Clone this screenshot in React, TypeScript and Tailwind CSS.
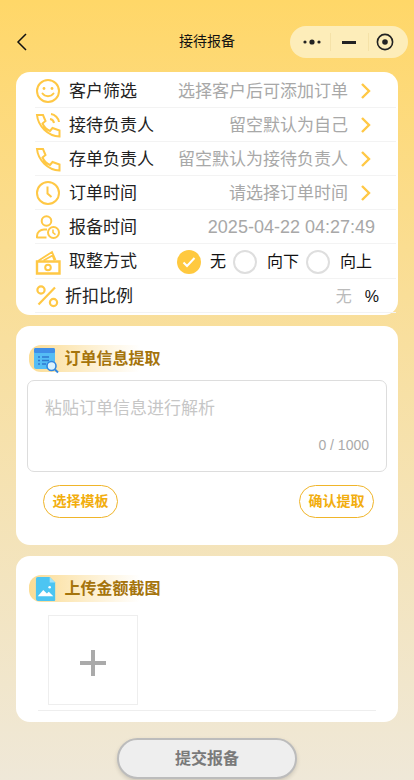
import React from "react";

const Y = "#ffc845";

function Chevron() {
  return (
    <svg width="12" height="18" viewBox="0 0 12 18" fill="none" className="ml-[12px] mr-[24px] mt-px shrink-0">
      <path d="M2 2l7 7-7 7" stroke="#ffc845" strokeWidth="2.4" />
    </svg>
  );
}

const Ico = ({ children }: { children: React.ReactNode }) => (
  <svg width="26" height="26" viewBox="0 0 26 26" fill="none" stroke={Y} strokeWidth="2" className="shrink-0">
    {children}
  </svg>
);

const Smile = () => (
  <Ico>
    <circle cx="13" cy="13" r="11" />
    <circle cx="9" cy="10.5" r="1.4" fill={Y} stroke="none" />
    <circle cx="17" cy="10.5" r="1.4" fill={Y} stroke="none" />
    <path d="M7.5 15.5c2.5 3.5 8.5 3.5 11 0" strokeLinecap="round" />
  </Ico>
);
const Phone = ({ waves }: { waves?: boolean }) => (
  <Ico>
    <path d="M2 3h6l2.5 6-3 2.5c1.5 3.5 4 6 7.5 7.5l2.5-3 7 2.5v6C13 24 3 14 2 3z" strokeLinejoin="miter" />
    {waves && (
      <>
        <path d="M15 7c2 .3 3.7 2 4 4" />
        <path d="M16 2c4 .5 7.5 4 8 8" />
      </>
    )}
  </Ico>
);
const Clock = () => (
  <Ico>
    <circle cx="13" cy="13" r="11" />
    <path d="M12.5 6.5v7l4 3.5" />
  </Ico>
);
const UserClock = () => (
  <Ico>
    <circle cx="11.5" cy="7" r="4.8" />
    <path d="M2 24v-2c0-4 3.5-6.5 7-6.5h3" />
    <path d="M1.5 23.5h10" />
    <circle cx="18.5" cy="18.5" r="5.5" />
    <path d="M18 15.5v3.2l2.5 2" strokeWidth="1.6" />
  </Ico>
);
const Money = () => (
  <Ico>
    <path d="M2 12.5h22.5v12H2z" strokeWidth="2.4" />
    <path d="M3 12L17 3l3.5 8M8.5 11.5l9-5 2 5" strokeWidth="1.8" />
    <circle cx="13" cy="18.5" r="2.8" />
  </Ico>
);
const Percent = () => (
  <svg width="24" height="24" viewBox="0 0 24 24" fill="none" stroke={Y} strokeWidth="2.2" className="shrink-0">
    <circle cx="6" cy="6" r="3.6" />
    <circle cx="18.5" cy="18.5" r="3.6" />
    <path d="M20 3.5L3.5 20.5" />
  </svg>
);

function Row({ icon, label, value }: { icon: React.ReactNode; label: string; value: string }) {
  return (
    <div className="flex h-[34px] items-center border-b border-[#f3f3f3]">
      {icon}
      <span className="ml-[8px] pt-[2px] text-[17px] text-[#222]">{label}</span>
      <span className="ml-auto pt-[2px] text-[17px] text-[#a8a8a8]">{value}</span>
      <Chevron />
    </div>
  );
}

function Radio({ on }: { on?: boolean }) {
  return on ? (
    <span className="flex h-[24px] w-[24px] items-center justify-center rounded-full bg-[#ffc93f]">
      <svg width="14" height="12" viewBox="0 0 14 12" fill="none">
        <path d="M1.5 6.5l3.5 3.5 7.5-8" stroke="#fff" strokeWidth="2" />
      </svg>
    </span>
  ) : (
    <span className="h-[24px] w-[24px] rounded-full border-2 border-[#dedede] bg-white" />
  );
}

function SectionTitle({ icon, text }: { icon: React.ReactNode; text: string }) {
  return (
    <div className="flex h-[27px] w-[111px] items-center rounded-l-[12px] bg-linear-to-r from-[#fbdc94] to-white/0">
      <div className="ml-[4px] w-[31.5px] shrink-0">{icon}</div>
      <span className="whitespace-nowrap text-[16px] font-bold leading-none text-[#a5740c]">{text}</span>
    </div>
  );
}

const OrderIcon = () => (
  <svg width="26" height="30" viewBox="0 0 26 30" className="mt-[2px]">
    <rect x="1" y="3" width="21" height="21" rx="2" fill="#55bdf5" />
    <rect x="1" y="3" width="21" height="5" rx="1.5" fill="#3f8ee8" />
    <path d="M5 12h2M9 12h7M5 15.5h2M9 15.5h7M5 19h2M9 19h4" stroke="#2f78cf" strokeWidth="1.4" />
    <circle cx="18.5" cy="21" r="4.5" fill="#d9f2ff" stroke="#2f86e0" strokeWidth="1.6" />
    <path d="M22 24.5l3 3" stroke="#2f86e0" strokeWidth="2" />
  </svg>
);
const ImageIcon = () => (
  <svg width="22" height="26" viewBox="0 0 24 28" className="ml-[2px]">
    <path d="M3 1h13l6 6v19a1 1 0 0 1-1 1H3a2 2 0 0 1-2-2V3a2 2 0 0 1 2-2z" fill="#4cc5f2" />
    <path d="M16 1l6 6h-6z" fill="#9fe3fb" />
    <path d="M3 22l6-7 4 4 2-2 5 5z" fill="#fff" />
    <circle cx="16" cy="12" r="1.4" fill="#fff" />
  </svg>
);

export default function App() {
  return (
    <div className="flex h-[780px] w-[414px] flex-col overflow-hidden bg-linear-to-b from-[#ffd768] to-[#efe8d8] px-[16px] font-['Liberation_Sans','Noto_Sans_CJK_SC',sans-serif]">
      <header className="-mx-[16px] flex h-[72px] shrink-0 items-start pt-[26px]">
        <svg width="14" height="20" viewBox="0 0 14 20" fill="none" className="ml-[15px] mt-[6px] shrink-0">
          <path d="M11 2L3 10l8 8" stroke="#111" strokeWidth="1.5" />
        </svg>
        <span className="ml-[150px] mt-[6px] text-[14px] leading-[18px] text-[#111]">接待报备</span>
        <div className="ml-auto mr-[6px] flex h-[32px] w-[118px] items-center rounded-full bg-[#fdedb9]">
          <div className="flex w-[40px] justify-center pl-[4px]">
            <svg width="20" height="8" viewBox="0 0 20 8"><circle cx="3" cy="4" r="1.6" fill="#222" /><circle cx="10" cy="4" r="2.6" fill="#222" /><circle cx="17" cy="4" r="1.6" fill="#222" /></svg>
          </div>
          <div className="h-[18px] w-px bg-[#f5e2a8]" />
          <div className="flex w-[37px] justify-center pr-[2px]">
            <div className="h-[3px] w-[14px] bg-[#222]" />
          </div>
          <div className="h-[18px] w-px bg-[#f5e2a8]" />
          <div className="flex flex-1 justify-center pr-[7px]">
            <svg width="18" height="18" viewBox="0 0 18 18" fill="none"><circle cx="9" cy="9" r="7.6" stroke="#222" strokeWidth="1.6" /><circle cx="9" cy="9" r="2.8" fill="#222" /></svg>
          </div>
        </div>
      </header>

      <section className="h-[243px] shrink-0 rounded-[14px] bg-white pl-[19px] pr-[2px] pt-[2px]">
        <Row icon={<Smile />} label="客户筛选" value="选择客户后可添加订单" />
        <Row icon={<Phone waves />} label="接待负责人" value="留空默认为自己" />
        <Row icon={<Phone />} label="存单负责人" value="留空默认为接待负责人" />
        <Row icon={<Clock />} label="订单时间" value="请选择订单时间" />
        <div className="flex h-[34px] items-center border-b border-[#f3f3f3]">
          <UserClock />
          <span className="ml-[8px] pt-[2px] text-[17px] text-[#222]">报备时间</span>
          <span className="ml-auto mr-[21px] pt-[2px] text-[18px] text-[#a8a8a8]">2025-04-22 04:27:49</span>
        </div>
        <div className="flex h-[35px] items-center border-b border-[#f3f3f3] pt-[2px] text-[16px] text-[#111]">
          <Money />
          <span className="ml-[8px] text-[17px] text-[#222]">取整方式</span>
          <span className="ml-[40px] flex items-center"><Radio on /><span className="ml-[9px]">无</span></span>
          <span className="ml-[7px] flex items-center"><Radio /><span className="ml-[10px]">向下</span></span>
          <span className="ml-[7px] flex items-center"><Radio /><span className="ml-[10px]">向上</span></span>
        </div>
        <div className="flex h-[34px] items-center border-b border-[#f3f3f3] text-[16px]">
          <Percent />
          <span className="ml-[6px] pt-[2px] text-[17px] text-[#222]">折扣比例</span>
          <span className="ml-auto pt-[2px] text-[#bbb]">无</span>
          <span className="ml-[13px] mr-[17px] pt-[2px] text-[#111]">%</span>
        </div>
      </section>

      <section className="mt-[11px] h-[219px] shrink-0 rounded-[14px] bg-white px-[11px] pt-[19px]">
        <div className="ml-[2px]"><SectionTitle icon={<OrderIcon />} text="订单信息提取" /></div>
        <div className="relative mt-[8px] h-[92px] rounded-[7px] border border-[#ddd] pl-[17px] pt-[15px]">
          <span className="text-[17px] text-[#c6c6c6]">粘贴订单信息进行解析</span>
          <span className="absolute bottom-[19px] right-[17px] text-[14px] leading-none text-[#aaa]">0 / 1000</span>
        </div>
        <div className="mt-[13px] flex justify-between px-[16px] pr-[13px]">
          <button className="h-[33px] w-[75px] rounded-full border border-[#f0b52a] text-[14px] font-bold text-[#f2ae0f]">选择模板</button>
          <button className="h-[33px] w-[75px] rounded-full border border-[#f0b52a] text-[14px] font-bold text-[#f2ae0f]">确认提取</button>
        </div>
      </section>

      <section className="mt-[11px] h-[166px] shrink-0 rounded-[14px] bg-white px-[13px] pt-[19px]">
        <SectionTitle icon={<ImageIcon />} text="上传金额截图" />
        <div className="ml-[19px] mt-[13px] flex h-[90px] w-[90px] items-center justify-center border border-[#eee] pt-[6px]">
          <svg width="26" height="26" viewBox="0 0 26 26"><path d="M13 0v26M0 13h26" stroke="#aaa" strokeWidth="4" /></svg>
        </div>
        <div className="ml-[9px] mr-[9px] mt-[5px] border-t border-[#eee]" />
      </section>

      <button className="mx-auto mt-[16px] h-[41px] w-[180px] shrink-0 rounded-full border-2 border-[#bcbcbc] bg-[#eeeeee] text-[16px] font-bold text-[#7a7a7a] shadow-[0_2px_4px_rgba(0,0,0,0.15)]">提交报备</button>
    </div>
  );
}
